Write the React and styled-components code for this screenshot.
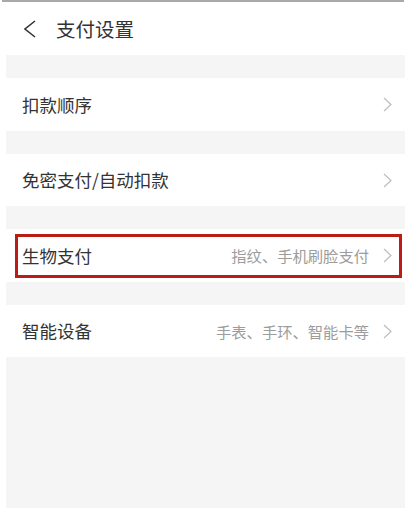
import styled, { createGlobalStyle } from 'styled-components';

const Reset = createGlobalStyle`
  html, body {
    margin: 0;
    padding: 0;
    background: #fff;
  }
  body {
    font-family: "Noto Sans CJK SC", "Noto Sans", sans-serif;
  }
`;

const rows = [
  { id: 1, label: '扣款顺序', note: '' },
  { id: 2, label: '免密支付/自动扣款', note: '' },
  { id: 3, label: '生物支付', note: '指纹、手机刷脸支付', marked: true },
  { id: 4, label: '智能设备', note: '手表、手环、智能卡等' },
];

const Chevron = ({ left, color, w, h, stroke }) => (
  <svg width={w} height={h} viewBox={`0 0 ${w} ${h}`} fill="none">
    <polyline
      points={left ? `${w - 1},1 1,${h / 2} ${w - 1},${h - 1}` : `1,1 ${w - 1},${h / 2} 1,${h - 1}`}
      stroke={color}
      strokeWidth={stroke}
      strokeLinejoin="miter"
    />
  </svg>
);

const App = () => {
  return (
    <>
      <Reset />
      <StyledFrame>
        <StyledScreen>
          <StyledHeader>
            <Chevron left color="#333" w={12} h={18} stroke={1.6} />
            <StyledTitle>支付设置</StyledTitle>
          </StyledHeader>
          {rows.map((row) => (
            <StyledGroup key={row.id}>
              <StyledRow>
                <StyledLabel>{row.label}</StyledLabel>
                {row.note && <StyledNote>{row.note}</StyledNote>}
                <StyledArrow>
                  <Chevron color="#bdbdbd" w={9} h={15} stroke={1.2} />
                </StyledArrow>
                {row.marked && <StyledMark />}
              </StyledRow>
            </StyledGroup>
          ))}
        </StyledScreen>
      </StyledFrame>
    </>
  );
};

export default App;

const StyledFrame = styled.div`
  margin: 0 3px 0 2px;
  border-top: 2px solid #a9a9a9;
  padding: 0 0 0 4px;
`;

const StyledScreen = styled.div`
  min-height: 506px;
  background-color: #f5f5f5;
  margin-right: -1px;
`;

const StyledHeader = styled.div`
  display: flex;
  align-items: center;
  gap: 20px;
  height: 53px;
  padding: 0 0 0 18px;
  background: #fff;
  box-sizing: border-box;
  svg {
    margin-top: 1px;
  }
`;

const StyledTitle = styled.div`
  font-size: 19.5px;
  color: #333;
`;

const StyledGroup = styled.div`
  padding-top: 23px;
`;

const StyledRow = styled.div`
  position: relative;
  display: flex;
  align-items: center;
  height: 52.5px;
  padding: 0 13px 0 16px;
  background: #fff;
  box-sizing: border-box;
`;

const StyledLabel = styled.div`
  flex: 1;
  font-size: 17.5px;
  color: #333;
`;

const StyledNote = styled.div`
  font-size: 15.3px;
  color: #9c9c9c;
  margin-right: 14px;
`;

const StyledArrow = styled.div`
  display: flex;
  align-items: center;
  margin-top: 1px;
`;

const StyledMark = styled.div`
  position: absolute;
  left: 9px;
  right: 3px;
  top: 5px;
  bottom: 4px;
  border: 3px solid #bb1d16;
  pointer-events: none;
`;
